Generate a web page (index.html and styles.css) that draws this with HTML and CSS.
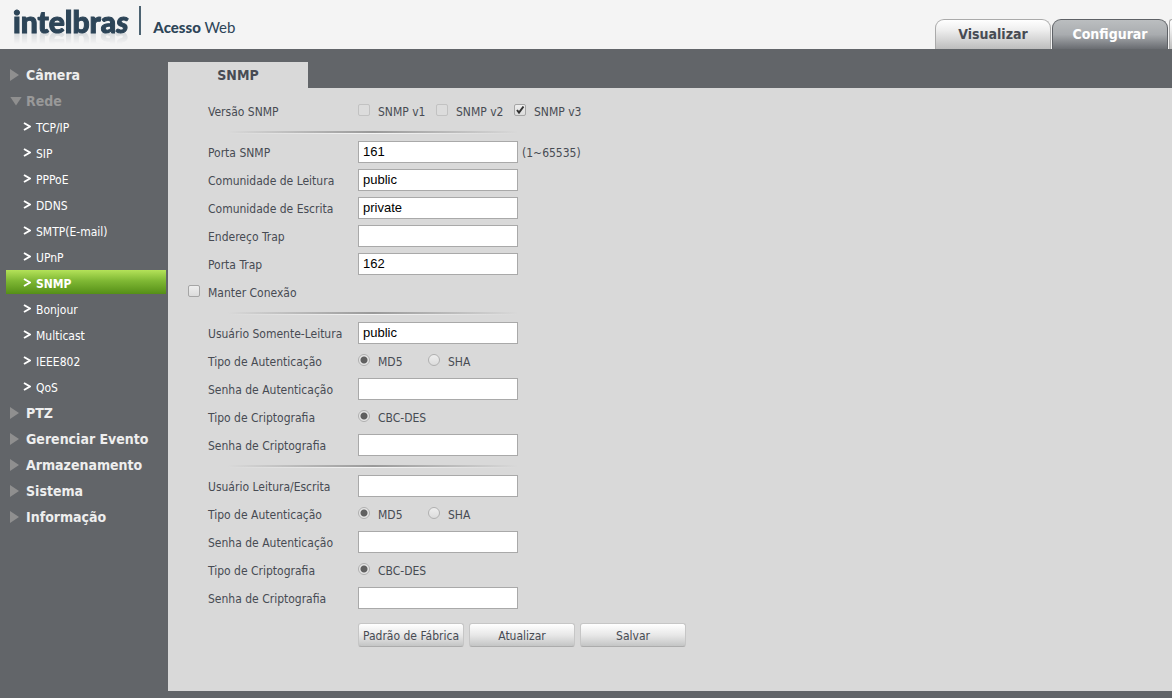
FILE: index.html
```html
<!DOCTYPE html>
<html lang="pt-BR">
<head>
<meta charset="utf-8">
<title>Intelbras - Acesso Web</title>
<link rel="stylesheet" href="styles.css">
</head>
<body>
<header class="header">
  <div class="brand">
    <span class="brand-name">intelbra<i>s</i></span>
    <span class="brand-product"><b>Acesso</b> Web</span>
  </div>
  <nav class="tabs">
    <a class="tab" href="#visualizar">Visualizar</a>
    <a class="tab tab-active" href="#configurar">Configurar</a>
    <span class="tab tab-edge"></span>
  </nav>
</header>
<div class="body">
  <nav class="menu">
    <a class="group" href="#camera">Câmera</a>
    <a class="group group-open" href="#rede">Rede</a>
    <a class="item" href="#tcpip"><svg class="chevron" viewBox="0 0 8 9"><path d="M1 1l6 3.5L1 8"/></svg>TCP/IP</a>
    <a class="item" href="#sip"><svg class="chevron" viewBox="0 0 8 9"><path d="M1 1l6 3.5L1 8"/></svg>SIP</a>
    <a class="item" href="#pppoe"><svg class="chevron" viewBox="0 0 8 9"><path d="M1 1l6 3.5L1 8"/></svg>PPPoE</a>
    <a class="item" href="#ddns"><svg class="chevron" viewBox="0 0 8 9"><path d="M1 1l6 3.5L1 8"/></svg>DDNS</a>
    <a class="item" href="#smtp"><svg class="chevron" viewBox="0 0 8 9"><path d="M1 1l6 3.5L1 8"/></svg>SMTP(E-mail)</a>
    <a class="item" href="#upnp"><svg class="chevron" viewBox="0 0 8 9"><path d="M1 1l6 3.5L1 8"/></svg>UPnP</a>
    <a class="item item-active" href="#snmp"><svg class="chevron" viewBox="0 0 8 9"><path d="M1 1l6 3.5L1 8"/></svg>SNMP</a>
    <a class="item" href="#bonjour"><svg class="chevron" viewBox="0 0 8 9"><path d="M1 1l6 3.5L1 8"/></svg>Bonjour</a>
    <a class="item" href="#multicast"><svg class="chevron" viewBox="0 0 8 9"><path d="M1 1l6 3.5L1 8"/></svg>Multicast</a>
    <a class="item" href="#ieee802"><svg class="chevron" viewBox="0 0 8 9"><path d="M1 1l6 3.5L1 8"/></svg>IEEE802</a>
    <a class="item" href="#qos"><svg class="chevron" viewBox="0 0 8 9"><path d="M1 1l6 3.5L1 8"/></svg>QoS</a>
    <a class="group" href="#ptz">PTZ</a>
    <a class="group" href="#evento">Gerenciar Evento</a>
    <a class="group" href="#armazenamento">Armazenamento</a>
    <a class="group" href="#sistema">Sistema</a>
    <a class="group" href="#informacao">Informação</a>
  </nav>
  <main class="main">
    <h1 class="page-tab">SNMP</h1>
    <form class="form">
      <div class="row">
        <span class="label">Versão SNMP</span>
        <div class="choices">
          <label class="choice version"><input class="tick" type="checkbox" disabled>SNMP v1</label>
          <label class="choice version"><input class="tick" type="checkbox" disabled>SNMP v2</label>
          <label class="choice version"><input class="tick" type="checkbox" checked>SNMP v3</label>
        </div>
      </div>
      <hr class="divider">
      <div class="row"><label class="label" for="port">Porta SNMP</label><input class="text" id="port" type="text" value="161"><span class="hint">(1~65535)</span></div>
      <div class="row"><label class="label" for="read">Comunidade de Leitura</label><input class="text" id="read" type="text" value="public"></div>
      <div class="row"><label class="label" for="write">Comunidade de Escrita</label><input class="text" id="write" type="text" value="private"></div>
      <div class="row"><label class="label" for="trap">Endereço Trap</label><input class="text" id="trap" type="text"></div>
      <div class="row"><label class="label" for="trapport">Porta Trap</label><input class="text" id="trapport" type="text" value="162"></div>
      <div class="row row-out"><label class="choice"><input class="tick" type="checkbox">Manter Conexão</label></div>
      <hr class="divider">
      <div class="row"><label class="label" for="ro">Usuário Somente-Leitura</label><input class="text" id="ro" type="text" value="public"></div>
      <div class="row">
        <span class="label">Tipo de Autenticação</span>
        <div class="choices">
          <label class="choice auth"><input class="radio" type="radio" name="roauth" checked>MD5</label>
          <label class="choice auth"><input class="radio" type="radio" name="roauth">SHA</label>
        </div>
      </div>
      <div class="row"><label class="label" for="roauthpw">Senha de Autenticação</label><input class="text" id="roauthpw" type="password"></div>
      <div class="row">
        <span class="label">Tipo de Criptografia</span>
        <label class="choice"><input class="radio" type="radio" name="rocrypt" checked>CBC-DES</label>
      </div>
      <div class="row"><label class="label" for="rocryptpw">Senha de Criptografia</label><input class="text" id="rocryptpw" type="password"></div>
      <hr class="divider">
      <div class="row"><label class="label" for="rw">Usuário Leitura/Escrita</label><input class="text" id="rw" type="text"></div>
      <div class="row">
        <span class="label">Tipo de Autenticação</span>
        <div class="choices">
          <label class="choice auth"><input class="radio" type="radio" name="rwauth" checked>MD5</label>
          <label class="choice auth"><input class="radio" type="radio" name="rwauth">SHA</label>
        </div>
      </div>
      <div class="row"><label class="label" for="rwauthpw">Senha de Autenticação</label><input class="text" id="rwauthpw" type="password"></div>
      <div class="row">
        <span class="label">Tipo de Criptografia</span>
        <label class="choice"><input class="radio" type="radio" name="rwcrypt" checked>CBC-DES</label>
      </div>
      <div class="row"><label class="label" for="rwcryptpw">Senha de Criptografia</label><input class="text" id="rwcryptpw" type="password"></div>
      <div class="actions">
        <button class="button" type="button">Padrão de Fábrica</button>
        <button class="button" type="button">Atualizar</button>
        <button class="button" type="button">Salvar</button>
      </div>
    </form>
  </main>
</div>
</body>
</html>
```
FILE: styles.css
```css
* { box-sizing: border-box; }
body {
  margin: 0;
  min-height: 100vh;
  display: flex;
  flex-direction: column;
  background: #626569;
  color: #474b53;
  font: 12px/16px "DejaVu Sans Condensed", "Noto Sans", sans-serif;
}
a { color: inherit; text-decoration: none; }

.header {
  display: flex;
  justify-content: space-between;
  height: 49px;
  padding-left: 13px;
  background: #f4f4f4;
  overflow: hidden;
}
.brand { display: flex; align-items: flex-start; padding-top: 6px; color: #2d4558; font-family: Lato, sans-serif; }
.brand-name {
  font-size: 30px;
  line-height: 30px;
  font-weight: 900;
  -webkit-text-stroke: 1px #2d4558;
  -webkit-box-reflect: below -7px linear-gradient(transparent 50%, rgba(0, 0, 0, 0.2));
}
.brand-product {
  margin-left: 11px;
  padding: 13px 0 0 12px;
  border-left: 2px solid #4d6372;
  font-size: 15px;
  line-height: 16px;
}
.brand-product b { font-weight: 900; }

.tabs { display: flex; gap: 1px; align-items: flex-end; }
.tab {
  width: 116px;
  height: 30px;
  border: 1px solid #aaa;
  border-bottom: 0;
  border-radius: 9px 9px 0 0;
  background: linear-gradient(#fff, #eee 35%, #bdbdbd);
  font-size: 14px;
  line-height: 28px;
  font-weight: bold;
  text-align: center;
}
.tab-active {
  border-color: #5e6166;
  background: linear-gradient(#bbbec0, #a9acaf 50%, #696c71);
  color: #fff;
}
.tab-edge { width: 3px; border-right: 0; border-radius: 3px 0 0 0; }

.body { flex: 1; display: flex; padding: 13px 0 7px; }
.menu { width: 168px; padding: 0 2px 0 6px; display: flex; flex-direction: column; gap: 2px; color: #fff; }
.group, .item { display: flex; align-items: center; height: 24px; padding-top: 2px; }
.group { padding-left: 4px; color: #eee; font-size: 14px; font-weight: bold; }
.group::before {
  content: "";
  width: 9px;
  height: 12px;
  margin-right: 7px;
  background: #8f8f8f;
  clip-path: polygon(0 0, 100% 50%, 0 100%);
}
.group-open { color: #999; }
.group-open::before { width: 12px; height: 9px; margin-right: 4px; clip-path: polygon(0 0, 100% 0, 50% 100%); }
.item { padding-left: 17px; padding-top: 3px; }
.chevron { width: 8px; height: 9px; margin: 0 5px 2px 0; fill: none; stroke: #fff; stroke-width: 2; }
.item-active { background: linear-gradient(#b4e259, #7fb834 45%, #558f17); font-weight: bold; }

.main { flex: 1; display: flex; flex-direction: column; }
.page-tab {
  width: 140px;
  margin: 0;
  background: #d9d9d9;
  font-size: 14px;
  line-height: 26px;
  text-align: center;
}
.form { flex: 1; padding: 9px 40px 44px; background: #d9d9d9; }
.row { display: flex; align-items: center; height: 28px; }
.row-out { margin-left: -20px; }
.label { width: 150px; padding-top: 1px; }
.text {
  width: 160px;
  height: 22px;
  padding: 0 4px 1px;
  border: 1px solid #a9a9a9;
  background: #fff;
  color: #000;
  font: 13px "Liberation Sans", Arial, sans-serif;
}
.hint { margin-left: 4px; padding-top: 2px; }
.choices { display: flex; }
.choice { display: flex; align-items: center; gap: 8px; padding-top: 2px; }
.version { width: 78px; white-space: nowrap; }
.auth { width: 70px; }
.tick, .radio {
  appearance: none;
  flex: none;
  width: 12px;
  height: 12px;
  margin: 0 0 4px;
  border: 1px solid #a5a5a5;
  border-radius: 2px;
  background: linear-gradient(#eee, #dcdcdc);
}
.tick:disabled { border-color: #c2c2c2; background: #dcdcdc; }
.tick:checked {
  background: url('data:image/svg+xml,<svg xmlns="http://www.w3.org/2000/svg" viewBox="0 0 10 10"><path d="M2 5l2 2.5L8.500 1.500" fill="none" stroke="%23333" stroke-width="2"/></svg>'), linear-gradient(#eee, #dcdcdc);
}
.radio { border-color: #b0b0b0; border-radius: 50%; }
.radio:checked { background: radial-gradient(circle, #606060 0 3px, #e6e6e6 4px); }
.divider {
  width: 290px;
  height: 3px;
  margin: 6px 0 4px 20px;
  border: 0;
  background:
    linear-gradient(90deg, transparent, #999 50%, transparent) top / 100% 2px no-repeat,
    linear-gradient(90deg, transparent, #f4f4f4 50%, transparent) bottom / 100% 1px no-repeat;
}
.actions { display: flex; gap: 5px; margin: 11px 0 0 150px; }
.button {
  width: 106px;
  height: 24px;
  padding: 1px 0 0;
  border: 1px solid #c6c6c6;
  border-bottom-color: #acacac;
  border-radius: 3px;
  background: linear-gradient(#fff, #e8e8e8 50%, #c4c5c5);
  color: inherit;
  font: inherit;
  white-space: nowrap;
}
```
